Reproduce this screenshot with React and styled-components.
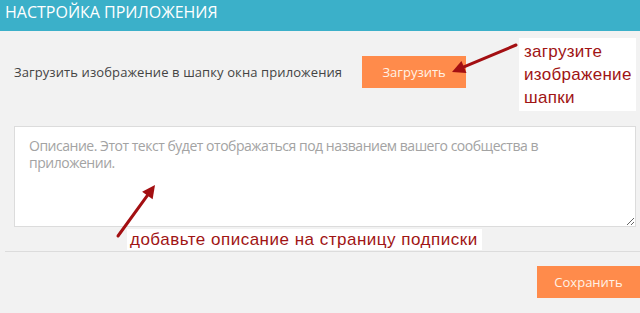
import React from 'react'
import styled, { createGlobalStyle } from 'styled-components'

const GlobalStyle = createGlobalStyle`
  html, body {
    margin: 0;
    padding: 0;
    background: #f2f2f2;
  }
  * {
    box-sizing: border-box;
  }
`

const Page = styled.div`
  position: relative;
  width: 640px;
  height: 313px;
  overflow: hidden;
  background: #f2f2f2;
  font-family: 'Open Sans', 'Noto Sans', sans-serif;
`

const Header = styled.header`
  height: 31px;
  background: #3bb0c9;
  color: #fff;
  padding-left: 5px;
  font-size: 16px;
  line-height: 24px;
  text-transform: uppercase;
  letter-spacing: 0;
`

const UploadRow = styled.div`
  display: flex;
  align-items: center;
  margin-top: 25px;
  padding-left: 14px;
  height: 32px;
`

const RowLabel = styled.span`
  color: #444;
  font-size: 13px;
  letter-spacing: 0.1px;
`

const OrangeButton = styled.button`
  width: ${(p) => p.$width || 104}px;
  height: 32px;
  border: none;
  background: #ff8b4b;
  color: #fff2e6;
  font-family: 'Open Sans', sans-serif;
  font-size: 13px;
  cursor: pointer;
  margin-left: ${(p) => p.$gap || 0}px;
`

const Description = styled.textarea`
  display: block;
  width: 622px;
  height: 101px;
  margin: 38px 0 0 14px;
  padding: 10px 14px;
  border: 1px solid #dcdcdc;
  background: #fff;
  font-family: 'Open Sans', sans-serif;
  font-size: 14px;
  line-height: 17px;
  letter-spacing: -0.48px;
  color: #444;
  &::placeholder {
    color: #a3a3a3;
  }
`

const Divider = styled.hr`
  margin: 24px 0 0 5px;
  border: none;
  border-top: 1px solid #dcdcdc;
`

const Footer = styled.div`
  display: flex;
  justify-content: flex-end;
  padding-top: 14px;
`

const Callout = styled.div`
  position: absolute;
  left: ${(p) => p.$x}px;
  top: ${(p) => p.$y}px;
  width: ${(p) => p.$w}px;
  background: #fff;
  padding: ${(p) => p.$pad};
  color: #a01414;
  font-family: 'Liberation Sans', Arial, sans-serif;
  font-size: 17px;
  line-height: ${(p) => p.$lh}px;
  letter-spacing: ${(p) => p.$ls || 0.3}px;
`

const Arrows = styled.svg`
  position: absolute;
  left: 0;
  top: 0;
  pointer-events: none;
`

const Arrow = ({ x1, y1, x2, y2 }) => {
  const dx = x2 - x1
  const dy = y2 - y1
  const len = Math.hypot(dx, dy)
  const ux = dx / len
  const uy = dy / len
  const head = 13
  const half = 6.5
  const bx = x2 - ux * head
  const by = y2 - uy * head
  const pts = `${x2},${y2} ${bx - uy * half},${by + ux * half} ${bx + uy * half},${by - ux * half}`
  return (
    <g>
      <line x1={x1} y1={y1} x2={bx + ux * 2} y2={by + uy * 2} stroke="#a30f12" strokeWidth="3" strokeLinecap="round" />
      <polygon points={pts} fill="#a30f12" />
    </g>
  )
}

export default function App() {
  return (
    <Page>
      <GlobalStyle />
      <Header>Настройка приложения</Header>
      <UploadRow>
        <RowLabel>Загрузить изображение в шапку окна приложения</RowLabel>
        <OrangeButton $gap={20}>Загрузить</OrangeButton>
      </UploadRow>
      <Description placeholder="Описание. Этот текст будет отображаться под названием вашего сообщества в приложении." />
      <Divider />
      <Footer>
        <OrangeButton $width={103}>Сохранить</OrangeButton>
      </Footer>

      <Callout $x={519} $y={38} $w={117} $lh={23} $pad="2px 5px">
        загрузите
        <br />
        изображение
        <br />
        шапки
      </Callout>
      <Callout $x={127} $y={229} $w={355} $lh={21} $pad="0 3px" $ls={0.5}>
        добавьте описание на страницу подписки
      </Callout>

      <Arrows width="640" height="313" viewBox="0 0 640 313">
        <Arrow x1={516} y1={45} x2={452} y2={72} />
        <Arrow x1={118} y1={236} x2={155} y2={185} />
      </Arrows>
    </Page>
  )
}
